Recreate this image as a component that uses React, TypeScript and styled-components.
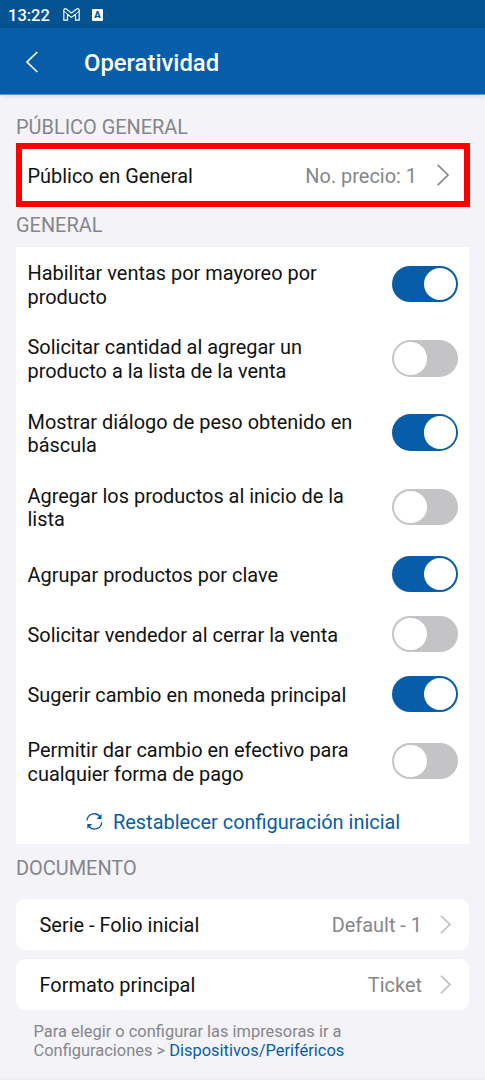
import React from 'react';
import styled, { createGlobalStyle } from 'styled-components';

const GlobalStyle = createGlobalStyle`
  * { box-sizing: border-box; }
  html, body { margin: 0; background: #f3f3f8; overflow: hidden; }
  body { font-family: Roboto, "Liberation Sans", sans-serif; font-size: 19.93px; color: #111; }
  h1, h2, p { margin: 0; font-weight: 400; }
  svg { display: block; flex: none; }
`;

const Screen = styled.div`
  width: 485px;
  height: 1080px;
  display: flex;
  flex-direction: column;
  overflow: hidden;
  background: #f3f3f8;
`;

const StatusBar = styled.div`
  height: 28px;
  flex: none;
  display: flex;
  align-items: center;
  padding: 1px 8px 0;
  background: #035291;
  color: #fff;
  font-size: 16.5px;
  font-weight: 500;
`;

const Clock = styled.span`
  width: 55px;
  padding-top: 1px;
`;

const Header = styled.header`
  height: 67px;
  flex: none;
  display: flex;
  align-items: center;
  padding: 1px 0 0 25px;
  background: #085da8;
  border-bottom: 1px solid #6596c5;
  box-shadow: 0 1px 5px rgba(0, 0, 0, 0.13);
  color: #fff;
`;

const Title = styled.h1`
  && { font-weight: 500; }
  margin-left: 45px;
  padding-top: 2px;
  font-size: 23.85px;
  line-height: 28px;
`;

const Content = styled.main`
  display: flex;
  flex-direction: column;
  padding: 0 16px;
`;

const SectionTitle = styled.h2<{ $height: number; $offset: number }>`
  height: ${(p) => p.$height}px;
  padding-top: ${(p) => p.$offset}px;
  font-size: 19.93px;
  line-height: 24px;
  color: #86868a;
`;

const HighlightedRow = styled.div`
  height: 64px;
  width: 454px;
  display: flex;
  align-items: center;
  border: 6px solid #ff0000;
  background: #fff;
  padding: 0 15px 0 5.5px;
`;

const Label = styled.span<{ $drop?: number }>`
  flex: 1;
  padding-top: ${(p) => p.$drop ?? 0}px;
  line-height: 23.4px;
  white-space: pre-line;
`;

const Value = styled.span<{ $gap: number; $drop?: number }>`
  margin-right: ${(p) => p.$gap}px;
  padding-top: ${(p) => p.$drop ?? 0}px;
  color: #86868a;
`;

const Panel = styled.section`
  width: 453px;
  height: 597px;
  background: #fff;
`;

const SettingRow = styled.div<{ $tall: boolean }>`
  height: ${(p) => (p.$tall ? 74.25 : 60)}px;
  display: flex;
  align-items: center;
  padding: 0 11px 0 11.5px;
`;

const Switch = styled.div<{ $on: boolean }>`
  width: 66px;
  height: 36.5px;
  flex: none;
  display: flex;
  align-items: center;
  justify-content: ${(p) => (p.$on ? 'flex-end' : 'flex-start')};
  padding: 0 2px;
  border-radius: 19px;
  background: ${(p) => (p.$on ? '#085da8' : '#c4c4c6')};
`;

const Knob = styled.div`
  width: 32.5px;
  height: 32.5px;
  border-radius: 50%;
  background: #fff;
`;

const ResetLink = styled.div`
  height: 46px;
  display: flex;
  align-items: center;
  padding: 1px 0 0 69.5px;
  gap: 10.5px;
  color: #085da8;
`;

const ResetText = styled.span`
  padding-top: 1px;
`;

const Card = styled.div`
  width: 453px;
  height: 51px;
  margin-bottom: 9px;
  display: flex;
  align-items: center;
  padding: 0 18px 0 23.5px;
  border-radius: 9px;
  background: #fff;
`;

const Hint = styled.p`
  padding: 3px 0 0 17.5px;
  font-size: 16.45px;
  line-height: 19.3px;
  color: #86868a;
`;

const HintLink = styled.span`
  color: #085da8;
`;

const BottomEdge = styled.div`
  height: 2px;
  flex: none;
  margin-top: auto;
  background: #efeff3;
`;

const MailIcon = () => (
  <svg width="17" height="13" viewBox="0 0 17 13" fill="none" stroke="#fff" strokeWidth="1.2" strokeLinejoin="round">
    <path d="M.8 2.300C.8.700 2.400.300 3.600 1.200l4.900 3.700 4.900-3.700c1.200-.9 2.800-.5 2.800 1.100v9.900h-3.700V6.300L8.500 9.400 4.500 6.300v5.900H.8z" />
    <path d="M.9 3.200l3.600 3.100M16.100 3.200l-3.600 3.100" strokeWidth="1" />
  </svg>
);

const AppBadge = styled.span`
  width: 11px;
  height: 12px;
  margin-left: 12px;
  border-radius: 1px;
  background: #fff;
  color: #035291;
  font-size: 9.5px;
  font-weight: 900;
  line-height: 12px;
  text-align: center;
`;

const Chevron = ({ large = false }: { large?: boolean }) => (
  <svg width={large ? 12 : 11} height={large ? 22 : 19} viewBox="0 0 12 22" fill="none" stroke={large ? '#86868a' : '#bcbcc0'} strokeWidth={large ? 1.6 : 1.9}>
    <path d="M.7.9 11 11 .7 21.100" />
  </svg>
);

const SyncIcon = () => (
  <svg width="17" height="17" viewBox="0 0 17 17" fill="none" stroke="#085da8" strokeWidth="1.3">
    <path d="M1 7.500A7.200 7.200 0 0 1 14 3.800M15.800 9.300A7.200 7.200 0 0 1 2.800 13" />
    <path d="M15.500 1v4.900h-4.900zM1.300 15.800v-4.900h4.900z" fill="#085da8" stroke="none" />
  </svg>
);

const settings = [
  { text: 'Habilitar ventas por mayoreo por\nproducto', on: true },
  { text: 'Solicitar cantidad al agregar un\nproducto a la lista de la venta', on: false },
  { text: 'Mostrar diálogo de peso obtenido en\nbáscula', on: true },
  { text: 'Agregar los productos al inicio de la\nlista', on: false },
  { text: 'Agrupar productos por clave', on: true },
  { text: 'Solicitar vendedor al cerrar la venta', on: false },
  { text: 'Sugerir cambio en moneda principal', on: true },
  { text: 'Permitir dar cambio en efectivo para\ncualquier forma de pago', on: false },
];

export default function App() {
  return (
    <Screen>
      <GlobalStyle />
      <StatusBar>
        <Clock>13:22</Clock>
        <MailIcon />
        <AppBadge>A</AppBadge>
      </StatusBar>
      <Header>
        <svg width="14" height="22" viewBox="0 0 14 22" fill="none" stroke="#fff" strokeWidth="1.7">
          <path d="M12.300 1 2 11l10.300 10" />
        </svg>
        <Title>Operatividad</Title>
      </Header>
      <Content>
        <SectionTitle $height={48} $offset={21}>PÚBLICO GENERAL</SectionTitle>
        <HighlightedRow>
          <Label $drop={3}>Público en General</Label>
          <Value $gap={20} $drop={2}>No. precio: 1</Value>
          <Chevron large />
        </HighlightedRow>
        <SectionTitle $height={40} $offset={7}>GENERAL</SectionTitle>
        <Panel>
          {settings.map((s) => (
            <SettingRow key={s.text} $tall={s.text.includes('\n')}>
              <Label $drop={2.9}>{s.text}</Label>
              <Switch $on={s.on}>
                <Knob />
              </Switch>
            </SettingRow>
          ))}
          <ResetLink>
            <SyncIcon />
            <ResetText>Restablecer configuración inicial</ResetText>
          </ResetLink>
        </Panel>
        <SectionTitle $height={55} $offset={13}>DOCUMENTO</SectionTitle>
        <Card>
          <Label $drop={2}>Serie - Folio inicial</Label>
          <Value $gap={18} $drop={1}>Default - 1</Value>
          <Chevron />
        </Card>
        <Card>
          <Label $drop={2}>Formato principal</Label>
          <Value $gap={18} $drop={1}>Ticket</Value>
          <Chevron />
        </Card>
        <Hint>
          Para elegir o configurar las impresoras ir a<br />
          Configuraciones &gt; <HintLink>Dispositivos/Periféricos</HintLink>
        </Hint>
      </Content>
      <BottomEdge />
    </Screen>
  );
}
